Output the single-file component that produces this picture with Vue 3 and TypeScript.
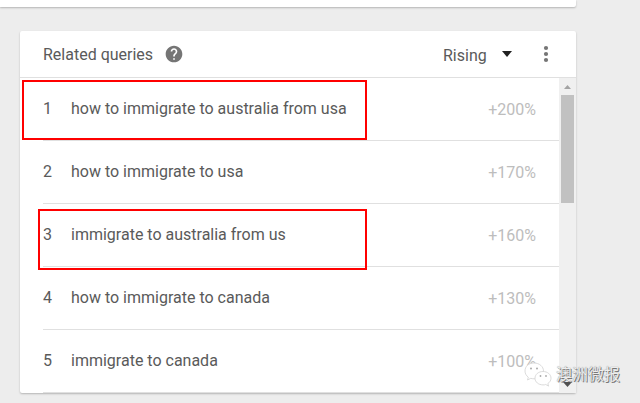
<script setup lang="ts">
import { ref } from 'vue'

interface Query {
  rank: number
  text: string
  change: string
}

const sort = ref('Rising')
const queries: Query[] = [
  { rank: 1, text: 'how to immigrate to australia from usa', change: '+200%' },
  { rank: 2, text: 'how to immigrate to usa', change: '+170%' },
  { rank: 3, text: 'immigrate to australia from us', change: '+160%' },
  { rank: 4, text: 'how to immigrate to canada', change: '+130%' },
  { rank: 5, text: 'immigrate to canada', change: '+100%' },
]
</script>

<template>
  <main class="page">
    <div class="card card-above"></div>
    <section class="card" aria-labelledby="title">
      <header class="head">
        <h2 id="title" class="title">Related queries</h2>
        <button class="icon-button help" type="button" aria-label="Help">
          <svg width="20" height="20" viewBox="0 0 24 24" fill="#757575">
            <path d="M12 2C6.48 2 2 6.48 2 12s4.48 10 10 10 10-4.48 10-10S17.52 2 12 2zm1 17h-2v-2h2v2zm2.07-7.75l-.9.92C13.45 12.9 13 13.5 13 15h-2v-.5c0-1.1.45-2.1 1.17-2.83l1.24-1.26c.37-.36.59-.86.59-1.41 0-1.1-.9-2-2-2s-2 .9-2 2H8c0-2.21 1.79-4 4-4s4 1.79 4 4c0 .88-.36 1.68-.93 2.25z" />
          </svg>
        </button>
        <label class="sort">
          <select v-model="sort" class="select" aria-label="Sort queries">
            <option>Rising</option>
            <option>Top</option>
          </select>
          <svg class="caret" width="10" height="6" viewBox="0 0 10 6" fill="#212121"><path d="M0 0h10L5 6z" /></svg>
        </label>
        <button class="icon-button more" type="button" aria-label="More options">
          <svg width="6" height="18" viewBox="0 0 6 18" fill="#757575">
            <circle cx="3" cy="3" r="2.1" /><circle cx="3" cy="9" r="2.1" /><circle cx="3" cy="15" r="2.1" />
          </svg>
        </button>
      </header>
      <div class="body">
        <div class="list">
          <table class="table">
            <tbody>
              <tr v-for="q in queries" :key="q.rank">
                <td class="rank">{{ q.rank }}</td>
                <td class="query">{{ q.text }}</td>
                <td class="change">{{ q.change }}</td>
              </tr>
            </tbody>
          </table>
        </div>
        <div class="scrollbar" aria-hidden="true">
          <svg class="up" width="7" height="4" viewBox="0 0 7 4" fill="#a3a3a3"><path d="M0 4h7L3.500 0z" /></svg>
          <div class="thumb"></div>
          <svg class="down" width="9" height="5" viewBox="0 0 9 5" fill="#505050"><path d="M0 0h9L4.500 5z" /></svg>
        </div>
        <div class="mark mark-first"></div>
        <div class="mark mark-third"></div>
      </div>
    </section>
    <div class="watermark">
      <svg width="28" height="26" viewBox="0 0 28 26" fill="#fff" stroke="#d2d2d2" stroke-width="0.8">
        <path d="M10 1C4.500 1 1 4.500 1 9c0 2.600 1.300 4.700 3.300 6.200L3.500 18l3.300-1.700c1 .3 2 .5 3.200.5 5.500 0 9.500-3.500 9.500-7.800S15.500 1 10 1z" />
        <path d="M19 9.500c-4.600 0-8 3-8 6.700s3.400 6.700 8 6.700c1 0 1.900-.1 2.700-.4l2.900 1.600-.8-2.500c2-1.300 3.200-3.200 3.200-5.400 0-3.700-3.400-6.700-8-6.700z" />
        <g fill="#aaa" stroke="none"><circle cx="7" cy="6.500" r="1" /><circle cx="13" cy="6.500" r="1" /><circle cx="16.500" cy="14" r=".9" /><circle cx="22" cy="14" r=".9" /></g>
      </svg>
      <span>澳洲微报</span>
    </div>
  </main>
</template>

<style>
body {
  background: #ededed;
}
</style>

<style scoped>
.page {
  position: relative;
  padding-bottom: 10px;
  font: 16px/20px Roboto, "Noto Sans CJK SC", sans-serif;
  color: #5a5a5a;
}
.card {
  margin: 0 64px 0 20px;
  background: #fff;
  border-radius: 2px;
  box-shadow: 0 1px 2px rgba(0, 0, 0, 0.24);
}
.card-above {
  height: 7px;
  margin: 0 64px 24px 0;
  border-radius: 0 0 2px 0;
}
.head {
  display: flex;
  align-items: center;
  height: 46px;
  padding: 0 27px 0 23px;
  border-bottom: 1px solid #e0e0e0;
}
.title {
  margin: 0;
  padding-top: 2px;
  font-size: 16px;
  font-weight: 400;
}
.icon-button {
  display: flex;
  padding: 0;
  border: 0;
  background: none;
}
.help {
  margin-left: 11px;
}
.sort {
  display: flex;
  align-items: center;
  position: relative;
  margin-left: auto;
}
.select {
  appearance: none;
  width: 70px;
  padding: 4px 0 0;
  border: 0;
  background: none;
  font: inherit;
  color: inherit;
}
.caret {
  position: absolute;
  right: 1px;
  pointer-events: none;
}
.more {
  margin-left: 30px;
}
.body {
  display: flex;
  position: relative;
}
.list {
  flex: 1;
  padding-left: 23px;
}
.table {
  width: 100%;
  border-collapse: separate;
  border-spacing: 0;
}
.table td {
  height: 62px;
  padding: 0;
  border-bottom: 1px solid #e0e0e0;
}
.table .rank {
  width: 28px;
}
.table .change {
  height: 60px;
  padding: 2px 23px 0 0;
  text-align: right;
  color: #bdbdbd;
}
.scrollbar {
  display: flex;
  flex-direction: column;
  align-items: center;
  width: 17px;
  background: #f0f0f0;
}
.up {
  margin: 7px 0 6px;
}
.thumb {
  width: 13px;
  height: 108px;
  background: #c1c1c1;
}
.down {
  margin: auto 0 6px;
}
.mark {
  position: absolute;
  box-sizing: border-box;
  border: 2px solid #f00;
  pointer-events: none;
}
.mark-first {
  top: 2px;
  left: 2px;
  width: 345px;
  height: 60px;
}
.mark-third {
  top: 131px;
  left: 18px;
  width: 329px;
  height: 61px;
}
.watermark {
  display: flex;
  align-items: center;
  gap: 4px;
  position: absolute;
  right: 20px;
  bottom: 15px;
  font-size: 16px;
  color: #ededed;
  text-shadow: 1px 1px 0 #777, 0 0 1px #777;
}
</style>
